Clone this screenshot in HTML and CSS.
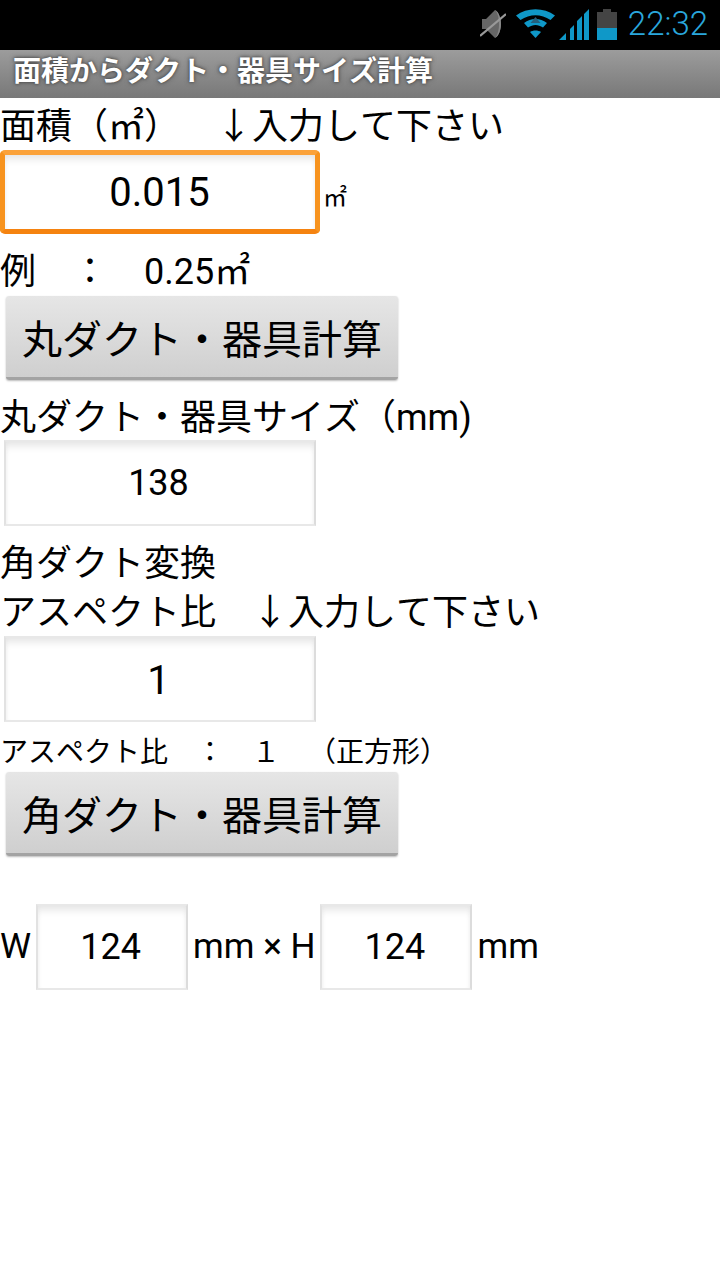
FILE: index.html
```html
<!DOCTYPE html>
<html lang="ja">
<head>
<meta charset="utf-8">
<title>面積からダクト・器具サイズ計算</title>
<link rel="stylesheet" href="styles.css">
</head>
<body>
<div class="status">
  <svg class="ic-mute" viewBox="0 0 26 28" width="26" height="28"><path d="M2 9h4L15 0c4 2 6 9 6 14s-2 12-6 14L6 19H2z" fill="#666"/><path d="M15 0c4 2 6 9 6 14s-2 12-6 14c3-3 4-9 4-14s-1-11-4-14z" fill="#888"/><path d="M0 26 26 4" stroke="#999" stroke-width="2.200"/></svg>
  <svg class="ic-wifi" viewBox="0 0 40 30" width="40" height="30"><path d="M0 6.500C11-2 28-2 39 6.500L34.500 11C25 4.500 14 4.500 4.500 11z" fill="#0f98c8"/><path d="M8 14C15 8.500 24 8.500 31 14L27 18.500C22 15 17 15 12 18.500z" fill="#0f98c8"/><path d="M14 23C17 21 22 21 25 23L19.500 29z" fill="#0f98c8"/><path d="M19.500 8 14.500 14H24.500z" fill="#24607c"/></svg>
  <svg class="ic-signal" viewBox="0 0 30 31" width="30" height="31"><path d="M0 31 7 24V31zM11 31V20L15 16V31zM18 31V12L23 7V31zM25 31V5L30 0V31z" fill="#0f98c8"/></svg>
  <svg class="ic-batt" viewBox="0 0 20 31" width="20" height="31"><path d="M6 0h8v3h6v16H0V3h6z" fill="#444"/><path d="M0 19h20v12H0z" fill="#0f98c8"/></svg>
  <span class="clock">22:32</span>
</div>
<div class="titlebar"><span class="title-text">面積からダクト・器具サイズ計算</span></div>
<main class="form">
  <div class="label l1">面積（㎡）　↓入力して下さい</div>
  <div class="input-row">
    <div class="field focus"><span class="lat">0.015</span></div>
    <span class="unit">㎡</span>
  </div>
  <div class="label l2">例　：　<span class="lat">0.25</span>㎡</div>
  <div class="btn">丸ダクト・器具計算</div>
  <div class="label l3">丸ダクト・器具サイズ（<span class="lat">mm)</span></div>
  <div class="field out"><span class="lat">138</span></div>
  <div class="label l4">角ダクト変換</div>
  <div class="label l5">アスペクト比　↓入力して下さい</div>
  <div class="field out aspect"><span class="lat">1</span></div>
  <div class="label small">アスペクト比　：　１　（正方形）</div>
  <div class="btn">角ダクト・器具計算</div>
  <div class="result-row">
    <span class="rtext lat">W</span>
    <div class="field narrow"><span class="lat">124</span></div>
    <span class="rtext lat">mm × H</span>
    <div class="field narrow"><span class="lat">124</span></div>
    <span class="rtext lat">mm</span>
  </div>
</main>
</body>
</html>
```
FILE: styles.css
```css
* { box-sizing: border-box; }
html, body { margin: 0; padding: 0; }
body {
  width: 720px;
  height: 1280px;
  background: #fff;
  color: #000;
  font-family: "Noto Sans CJK JP", sans-serif;
  font-kerning: none;
  text-spacing-trim: space-all;
  overflow: hidden;
}
.lat { font-family: Roboto, sans-serif; }
.status {
  height: 50px;
  background: #000;
  display: flex;
  align-items: center;
  justify-content: flex-end;
  padding: 0 12px 2px 0;
}
.ic-mute { margin-right: 10px; }
.ic-wifi { margin-right: 3px; }
.ic-signal { margin-right: 8px; }
.ic-batt { margin-right: 11px; }
.clock { color: #2aa7dc; font-family: Roboto, sans-serif; font-size: 33px; font-weight: 300; line-height: 48px; }
.titlebar {
  height: 48px;
  background: linear-gradient(#9c9c9c, #787878);
  padding: 0 0 10px 13px;
  display: flex;
  align-items: center;
}
.title-text {
  color: #fff;
  font-size: 28px;
  font-weight: 700;
  text-shadow: 0 0 3px #444, 0 0 5px #555;
  line-height: 38px;
}
.form { display: flex; flex-direction: column; }
.label { font-size: 36px; white-space: nowrap; }
.l1 { height: 52px; line-height: 50px; }
.l2 { height: 62px; line-height: 44px; padding-top: 12px; }
.l3 { height: 60px; line-height: 68px; }
.l4 { height: 48px; line-height: 41px; margin-top: 14px; }
.l5 { height: 48px; line-height: 42px; }
.small { font-size: 28px; height: 50px; line-height: 56px; }
.input-row { display: flex; align-items: center; height: 84px; }
.unit { font-size: 24px; margin-left: 3px; padding-top: 6px; }
.field {
  background: #fff;
  border: 2px solid #e8e8e8;
  border-left-color: #e2e2e2;
  border-right-color: #dcdcdc;
  box-shadow: inset 0 9px 10px -6px #e0e0e0, inset 4px 0 5px -4px #eee, inset -4px 0 5px -4px #eee;
  display: flex;
  align-items: center;
  justify-content: center;
  padding-right: 3px;
  font-size: 36px;
}
.field.focus {
  width: 320px;
  height: 84px;
  border: 5px solid #f7931e;
  border-top-color: #fba23a;
  border-bottom-color: #f58310;
  border-radius: 5px;
  padding-right: 1px;
  font-size: 40px;
}
.field.out { width: 312px; height: 86px; margin-left: 4px; }
.field.aspect { font-size: 40px; padding-top: 3px; padding-right: 3px; }
.btn {
  width: 392px;
  height: 84px;
  margin-left: 6px;
  background: linear-gradient(#e6e6e6, #cfcfcf);
  border-radius: 3px;
  border-bottom: 3px solid #a3a3a3;
  box-shadow: 0 1px 2px #bbb;
  display: flex;
  align-items: center;
  justify-content: center;
  font-size: 40px;
  white-space: nowrap;
}
.result-row { display: flex; align-items: center; height: 86px; margin-top: 48px; }
.rtext { font-size: 35px; white-space: nowrap; padding-bottom: 2px; }
.field.narrow { width: 152px; height: 86px; margin: 0 5px; }
```
